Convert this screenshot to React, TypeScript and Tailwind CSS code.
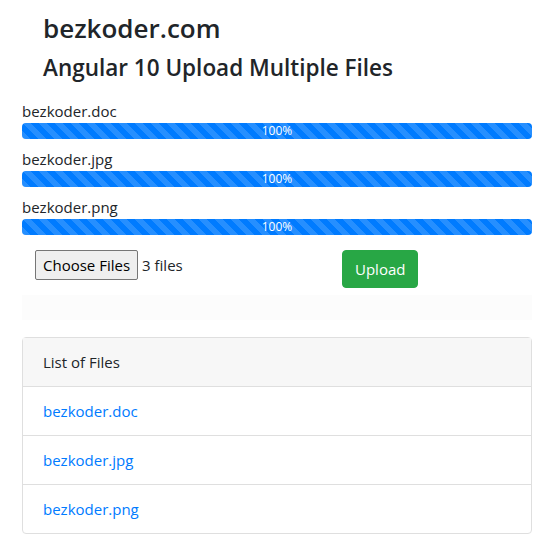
const files = ['bezkoder.doc', 'bezkoder.jpg', 'bezkoder.png'];

const stripes =
  'bg-[linear-gradient(45deg,rgba(255,255,255,.15)_25%,transparent_25%,transparent_50%,rgba(255,255,255,.15)_50%,rgba(255,255,255,.15)_75%,transparent_75%,transparent)] bg-size-[16px_16px]';

const ProgressBar = ({ name }: { name: string }) => (
  <div>
    <div className="text-[15px] leading-6">{name}</div>
    <div className="h-4 rounded bg-[#e9ecef] overflow-hidden">
      <div
        className={`h-4 w-full bg-[#007bff] ${stripes} text-white text-[12px] leading-4 text-center`}
      >
        100%
      </div>
    </div>
  </div>
);

export default function App() {
  return (
    <div
      className="w-[560px] h-[560px] bg-white text-[#212529] pl-[22px] pr-[28px]"
      style={{ fontFamily: '"Open Sans", "Noto Sans", sans-serif' }}
    >
      <div className="pl-[21px] pt-[11px]">
        <h3 className="text-[26px] leading-[34px] font-semibold">bezkoder.com</h3>
        <h4 className="mt-2 text-[22.5px] leading-[29px] font-semibold">
          Angular 10 Upload Multiple Files
        </h4>
      </div>

      <div className="mt-[17px] flex flex-col gap-2">
        {files.map((f) => (
          <ProgressBar key={f} name={f} />
        ))}
      </div>

      <div className="mt-[15px] flex items-start">
        <div className="pl-[13px] flex items-center w-[320px]">
          <button className="h-[30px] px-[7px] border border-[#767676] rounded-[2px] bg-[#efefef] text-[15px] leading-5 text-black">
            Choose Files
          </button>
          <span className="ml-1 text-[15px]">3 files</span>
        </div>
        <button className="h-[38px] px-3 rounded bg-[#28a745] border border-[#28a745] text-white text-[15px] leading-6">
          Upload
        </button>
      </div>

      <div className="mt-[7px] h-[25px] bg-[#fcfcfc]" />

      <div className="mt-[17px] border border-[#dfdfdf] rounded">
        <div className="px-5 py-3 leading-6 text-[15px] bg-[#f7f7f7] border-b border-[#dfdfdf]">
          List of Files
        </div>
        {files.map((f, i) => (
          <div
            key={f}
            className={`px-5 py-3 leading-6 text-[15px] ${i < files.length - 1 ? 'border-b border-[#dfdfdf]' : ''}`}
          >
            <a href="#" className="text-[#007bff]">
              {f}
            </a>
          </div>
        ))}
      </div>
    </div>
  );
}
